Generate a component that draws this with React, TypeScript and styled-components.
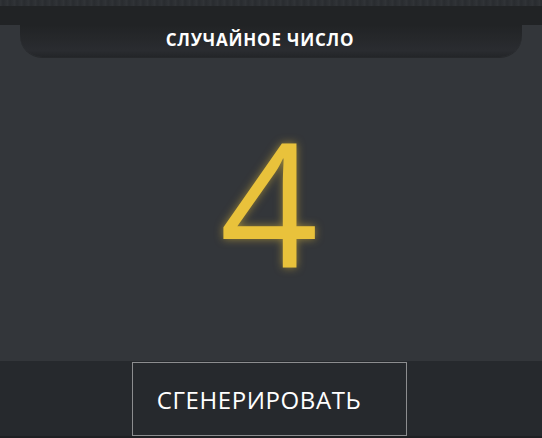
import styled, { createGlobalStyle } from "styled-components";

const GlobalStyle = createGlobalStyle`
  html, body {
    margin: 0;
    padding: 0;
    background: #33363a;
  }
  body {
    font-family: "Open Sans", "Liberation Sans", sans-serif;
  }
`;

const Page = styled.div`
  display: flex;
  flex-direction: column;
  width: 542px;
  height: 438px;
  overflow: hidden;
`;

const TopStrip = styled.div`
  height: 6px;
  background-color: #2b2e32;
  background-image: repeating-linear-gradient(
    90deg,
    rgba(255, 255, 255, 0.03) 0px,
    rgba(0, 0, 0, 0.05) 3px,
    rgba(255, 255, 255, 0.02) 7px
  );
`;

const Band = styled.div`
  height: 19px;
  background: #212325;
`;

const Main = styled.div`
  flex: 1;
  display: flex;
  flex-direction: column;
  background: #33363a;
`;

const Tab = styled.div`
  height: 32px;
  margin: 0 20px;
  padding-right: 22px;
  display: flex;
  align-items: flex-start;
  justify-content: center;
  border-radius: 0 0 22px 22px;
  background: linear-gradient(180deg, #212325 0%, #2a2c30 80%, #232528 100%);
  box-shadow: 0 1px 0 rgba(0, 0, 0, 0.25);
`;

const Title = styled.h1`
  margin: 0;
  margin-top: 3px;
  font-size: 17px;
  font-weight: 700;
  line-height: 24px;
  letter-spacing: 0.8px;
  color: #ffffff;
`;

const NumberBox = styled.div`
  flex: 1;
  display: flex;
  align-items: center;
  justify-content: center;
`;

const Digit = styled.span`
  font-size: 172px;
  font-weight: 400;
  line-height: 1;
  color: #e9c23b;
  text-shadow: 0 0 8px rgba(233, 194, 59, 0.55);
  margin-bottom: 16px;
  margin-right: 4px;
`;

const Footer = styled.div`
  height: 77px;
  display: flex;
  justify-content: center;
  align-items: flex-start;
  padding-top: 1px;
  box-sizing: border-box;
  background: #26292d;
  border-bottom: 2px solid #1e2023;
`;

const Button = styled.button`
  width: 275px;
  height: 74px;
  margin-right: 4px;
  padding: 0 20px 0 0;
  box-sizing: border-box;
  border: 1px solid #8c8d8f;
  background: #26292d;
  color: #ffffff;
  font-family: "Open Sans", "Liberation Sans", sans-serif;
  font-size: 24px;
  font-weight: 400;
  letter-spacing: 0.6px;
  cursor: pointer;
`;

export default function App() {
  return (
    <>
      <GlobalStyle />
      <Page>
        <TopStrip />
        <Band />
        <Main>
          <Tab>
            <Title>СЛУЧАЙНОЕ ЧИСЛО</Title>
          </Tab>
          <NumberBox>
            <Digit>4</Digit>
          </NumberBox>
        </Main>
        <Footer>
          <Button>СГЕНЕРИРОВАТЬ</Button>
        </Footer>
      </Page>
    </>
  );
}
